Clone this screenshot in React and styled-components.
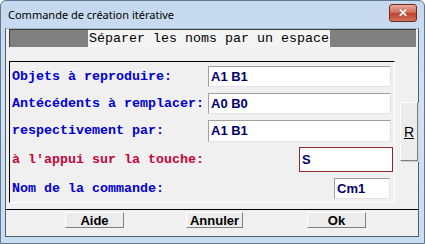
import React from 'react';
import styled, { createGlobalStyle } from 'styled-components';

const Global = createGlobalStyle`
  html, body { margin: 0; padding: 0; background: #ffffff; }
  * { box-sizing: border-box; }
`;

const Window = styled.div`
  width: 425px;
  height: 244px;
  display: flex;
  flex-direction: column;
  background: linear-gradient(180deg, #c4d8ee 0%, #d3e2f3 40%, #cadcf0 100%);
  border: 1px solid #5f7790;
  border-radius: 6px 6px 0 0;
  padding: 0 5px 6px 4px;
`;

const TitleBar = styled.div`
  height: 27px;
  display: flex;
  align-items: center;
  justify-content: space-between;
  padding: 0 2px 0 3px;
  font-family: 'Noto Sans', 'Liberation Sans', sans-serif;
  font-size: 11px;
  color: #000;
`;

const CloseButton = styled.div`
  width: 28px;
  height: 18px;
  margin-top: -3px;
  border: 1px solid #6d2a1e;
  border-radius: 3px;
  background: linear-gradient(180deg, #e9a99c 0%, #d4705d 45%, #c2412b 55%, #d1735f 100%);
  display: flex;
  align-items: center;
  justify-content: center;
  color: #fff;
  font-family: 'Liberation Sans', sans-serif;
  font-weight: bold;
  font-size: 12px;
  text-shadow: 0 0 1px #5a1a10;
`;

const Client = styled.div`
  flex: 1;
  display: flex;
  flex-direction: column;
  background: #f0f0f0;
  border: 1px solid #4f5f70;
  border-top-color: #9fb3c9;
`;

const Banner = styled.div`
  margin: 0 2px 0 3px;
  height: 18px;
  background: #808080;
  border-top: 1px solid #404040;
  border-left: 1px solid #404040;
  display: flex;
  justify-content: center;
  align-items: stretch;
`;

const BannerText = styled.span`
  background: #f4f4f4;
  padding: 0 1px;
  margin-left: -8px;
  font-family: 'Liberation Mono', monospace;
  font-size: 13.33px;
  line-height: 17px;
  color: #000;
`;

const Body = styled.div`
  display: flex;
  align-items: flex-start;
  margin-top: 14px;
  padding-left: 3px;
`;

const Frame = styled.div`
  width: 387px;
  height: 142px;
  border-top: 1px solid #000;
  border-left: 1px solid #000;
  border-right: 1px solid #ffffff;
  border-bottom: 1px solid #ffffff;
  display: flex;
  flex-direction: column;
  padding: 1px 0 0 2px;
`;

const Row = styled.div`
  height: ${p => p.$h}px;
  display: flex;
  align-items: center;
`;

const Label = styled.span`
  width: 196px;
  flex-shrink: 0;
  font-family: 'Liberation Mono', monospace;
  font-weight: bold;
  font-size: 13.33px;
  color: ${p => (p.$red ? '#c4053a' : '#0000d4')};
  white-space: nowrap;
`;

const Field = styled.div`
  width: ${p => p.$w}px;
  height: ${p => p.$hgt || 21}px;
  margin-left: ${p => p.$left || 0}px;
  background: #fff;
  border: 1px solid;
  border-color: ${p => (p.$red ? '#8a2a2a' : '#a0a0a0 #e4e4e4 #e4e4e4 #a0a0a0')};
  display: flex;
  align-items: center;
  padding-left: 2px;
  font-family: 'Liberation Sans', Arial, sans-serif;
  font-weight: bold;
  font-size: 13px;
  color: #00006e;
`;

const Side = styled.div`
  padding-top: 41px;
  padding-left: 5px;
`;

const RButton = styled.div`
  width: 18px;
  height: 59px;
  background: #ececec;
  border: 1px solid;
  border-color: #ffffff #808080 #808080 #ffffff;
  box-shadow: 1px 1px 0 #cfcfcf;
  display: flex;
  align-items: center;
  justify-content: center;
  font-family: 'Liberation Sans', Arial, sans-serif;
  font-size: 14px;
  text-decoration: underline;
  color: #000;
`;

const ButtonBar = styled.div`
  margin-top: 6px;
  border-top: 1px solid #000;
  display: flex;
  padding-top: 2px;
`;

const Button = styled.div`
  width: ${p => p.$w}px;
  height: 16px;
  margin-left: ${p => p.$left}px;
  background: #ececec;
  border: 1px solid;
  border-color: #ffffff #808080 #808080 #ffffff;
  display: flex;
  align-items: center;
  justify-content: center;
  font-family: 'Liberation Sans', Arial, sans-serif;
  font-weight: bold;
  font-size: 13px;
  color: #000;
`;

const rows = [
  { label: 'Objets à reproduire:', value: 'A1 B1', h: 27, w: 183 },
  { label: 'Antécédents à remplacer:', value: 'A0 B0', h: 28, w: 183 },
  { label: 'respectivement par:', value: 'A1 B1', h: 27, w: 183, hgt: 22 },
  { label: "à l'appui sur la touche:", value: 'S', h: 31, w: 94, left: 91, hgt: 25, red: true },
  { label: 'Nom de la commande:', value: 'Cm1', h: 28, w: 56, left: 126 },
];

export default function App() {
  return (
    <>
      <Global />
      <Window>
        <TitleBar>
          <span>Commande de création itérative</span>
          <CloseButton>✕</CloseButton>
        </TitleBar>
        <Client>
          <Banner>
            <BannerText>Séparer les noms par un espace</BannerText>
          </Banner>
          <Body>
            <Frame>
              {rows.map(r => (
                <Row key={r.label} $h={r.h}>
                  <Label $red={r.red}>{r.label}</Label>
                  <Field $w={r.w} $left={r.left} $hgt={r.hgt} $red={r.red}>{r.value}</Field>
                </Row>
              ))}
            </Frame>
            <Side>
              <RButton>R</RButton>
            </Side>
          </Body>
          <ButtonBar>
            <Button $w={59} $left={59}>Aide</Button>
            <Button $w={57} $left={62}>Annuler</Button>
            <Button $w={59} $left={64}>Ok</Button>
          </ButtonBar>
        </Client>
      </Window>
    </>
  );
}
